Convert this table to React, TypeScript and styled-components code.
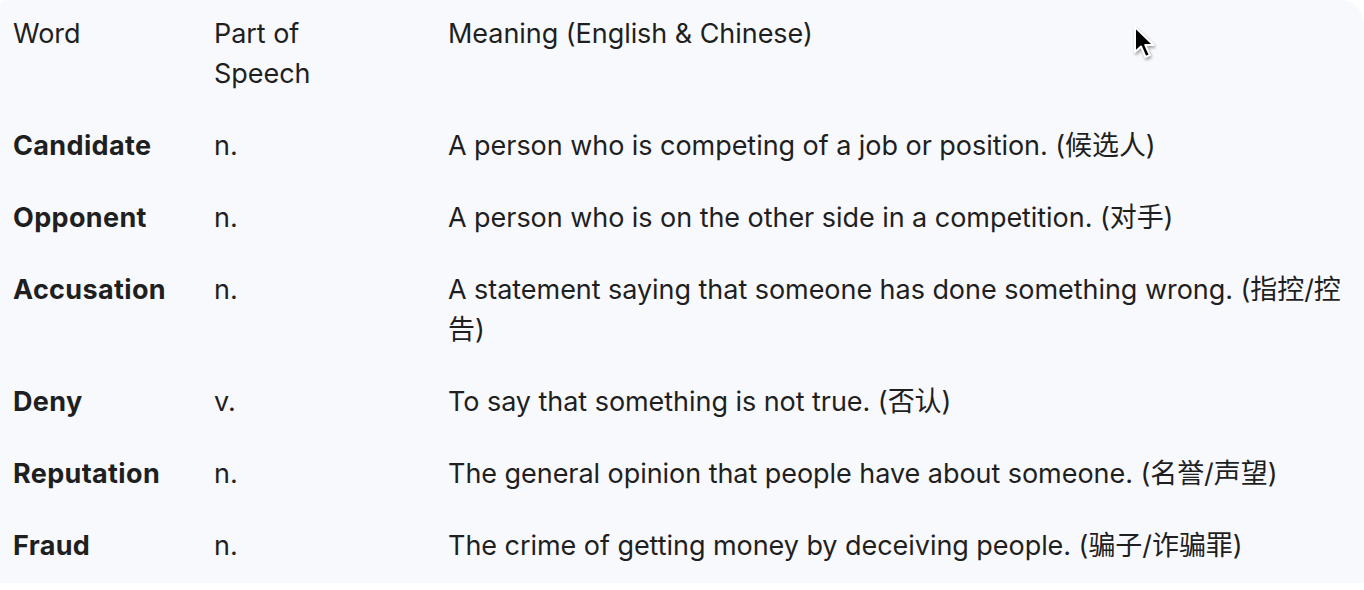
import React from "react";
import styled, { createGlobalStyle } from "styled-components";

const GlobalStyle = createGlobalStyle`
  html, body { margin: 0; padding: 0; background: #ffffff; }
  body { font-family: Inter, "Noto Sans CJK SC", sans-serif; color: #1f1f1f; }
`;

const Panel = styled.div`
  position: relative;
  width: 1364px;
  background: #f8f9fd;
  border-radius: 6px 24px 0 0;
  padding: 14px 0 1px 0;
  box-sizing: border-box;
`;

const Table = styled.div`
  display: grid;
  grid-template-columns: 201px 234px 929px;
`;

const Cell = styled.div<{ $head?: boolean; $bold?: boolean }>`
  padding: ${(p) => (p.$head ? "0 13px 16px 13px" : "16px 13px 16px 13px")};
  font-size: 27px;
  line-height: 40px;
  font-weight: ${(p) => (p.$bold ? 700 : 400)};
  letter-spacing: ${(p) => (p.$bold ? "0.35px" : "-0.05px")};
`;

const Cursor = styled.svg`
  position: absolute;
  left: 1132px;
  top: 24px;
  width: 28px;
  height: 40px;
  filter: drop-shadow(1px 2px 1.5px rgba(0, 0, 0, 0.35));
`;

const rows: [string, string, React.ReactNode][] = [
  ["Candidate", "n.", "A person who is competing of a job or position. (候选人)"],
  ["Opponent", "n.", "A person who is on the other side in a competition. (对手)"],
  ["Accusation", "n.", "A statement saying that someone has done something wrong. (指控/控告)"],
  ["Deny", "v.", "To say that something is not true. (否认)"],
  ["Reputation", "n.", "The general opinion that people have about someone. (名誉/声望)"],
  ["Fraud", "n.", "The crime of getting money by deceiving people. (骗子/诈骗罪)"],
];

export default function App() {
  return (
    <>
      <GlobalStyle />
      <Panel>
        <Table>
          <Cell $head>Word</Cell>
          <Cell $head>
            Part of
            <br />
            Speech
          </Cell>
          <Cell $head>Meaning (English &amp; Chinese)</Cell>
          {rows.map(([w, p, m]) => (
            <React.Fragment key={w}>
              <Cell $bold>{w}</Cell>
              <Cell>{p}</Cell>
              <Cell>{m}</Cell>
            </React.Fragment>
          ))}
        </Table>
        <Cursor viewBox="0 0 28 40">
          <path
            d="M3 3 L3 28 L9 22.5 L13.5 33 L17.8 31.2 L13.3 21 L21.5 21 Z"
            fill="#000"
            stroke="#fff"
            strokeWidth="2"
            strokeLinejoin="round"
          />
        </Cursor>
      </Panel>
    </>
  );
}
